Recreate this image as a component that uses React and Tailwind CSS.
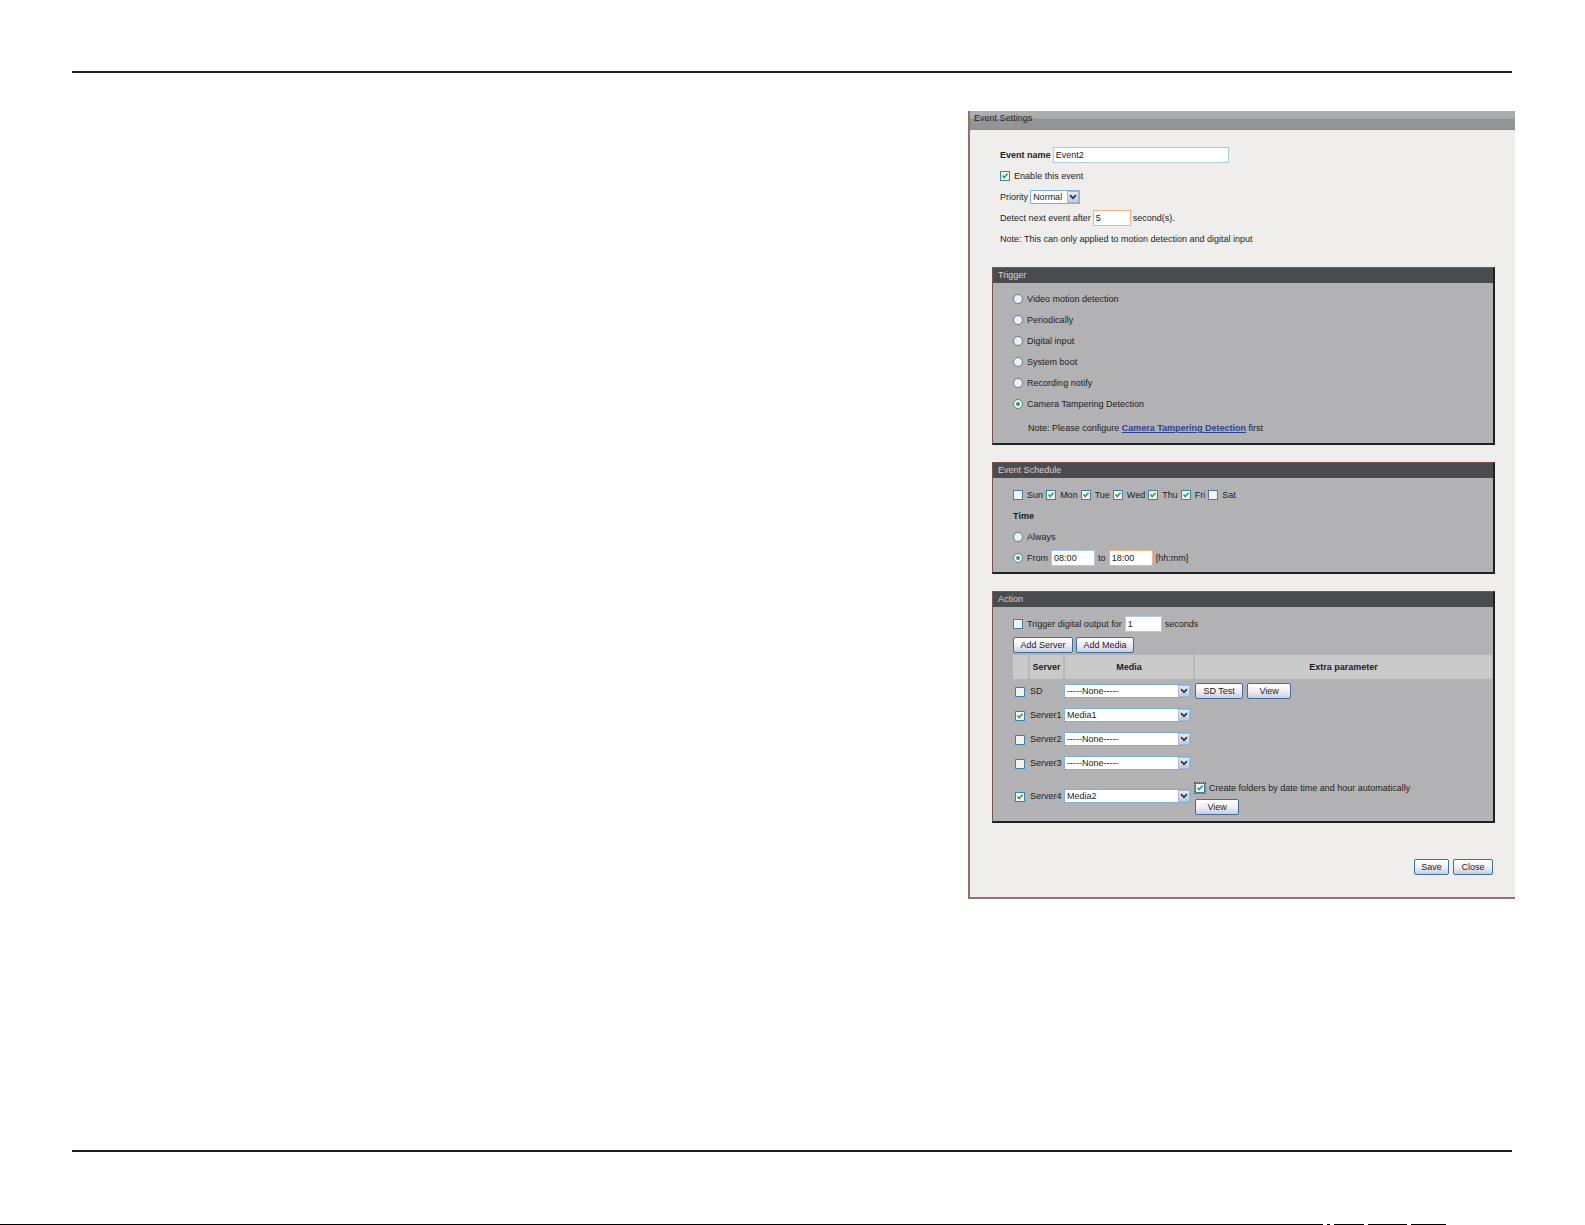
import React from 'react';

const triggers = [
    'Video motion detection',
    'Periodically',
    'Digital input',
    'System boot',
    'Recording notify',
    'Camera Tampering Detection',
];

const days = [
    { name: 'Sun', on: false },
    { name: 'Mon', on: true },
    { name: 'Tue', on: true },
    { name: 'Wed', on: true },
    { name: 'Thu', on: true },
    { name: 'Fri', on: true },
    { name: 'Sat', on: false },
];

const servers = [
    { name: 'SD', media: '-----None-----', on: false },
    { name: 'Server1', media: 'Media1', on: true },
    { name: 'Server2', media: '-----None-----', on: false },
    { name: 'Server3', media: '-----None-----', on: false },
    { name: 'Server4', media: 'Media2', on: true },
];

function Checkbox({ className = '', ...props }) {
    return (
        <span className={`relative inline-flex size-[10px] shrink-0 ${className}`}>
            <input
                type="checkbox"
                className="peer size-full appearance-none border border-[#3f7fae] bg-[#f6f2f2]"
                {...props}
            />
            <svg
                viewBox="0 0 10 10"
                className="pointer-events-none absolute inset-0 hidden size-full peer-checked:block"
            >
                <path d="M2.5 4.6 L4.2 6.6 L7.6 2.8" fill="none" stroke="#2fa24c" strokeWidth="1.6" />
            </svg>
        </span>
    );
}

function Radio(props) {
    return (
        <span className="relative inline-flex size-[10px] shrink-0">
            <input
                type="radio"
                className="peer size-full appearance-none rounded-full border border-[#4c7f9f] bg-[#f4efee]"
                {...props}
            />
            <span className="pointer-events-none absolute inset-[3px] hidden rounded-full bg-[#2fa24c] peer-checked:block" />
        </span>
    );
}

function TextBox({ className = '', active = false, ...props }) {
    return (
        <input
            type="text"
            className={`h-4 border bg-white px-[2px] ${active ? 'border-[#f5b183]' : 'border-[#a9cbe3]'} ${className}`}
            {...props}
        />
    );
}

function Select({ className = '', options, ...props }) {
    return (
        <span className={`relative inline-flex h-[14px] ${className}`}>
            <select
                className="size-full appearance-none border border-[#7fb0d6] bg-white pr-[14px] pl-[2px] leading-3"
                {...props}
            >
                {options.map((option) => (
                    <option key={option}>{option}</option>
                ))}
            </select>
            <span className="pointer-events-none absolute top-px right-px bottom-px flex w-3 items-center justify-center border border-[#a9b9d0] bg-linear-to-b from-[#e6ebf3] to-[#c3c8dc]">
                <svg viewBox="0 0 8 6" className="h-[6px] w-2">
                    <path d="M1 1.2 L4 4.2 L7 1.2" fill="none" stroke="#333a40" strokeWidth="1.8" />
                </svg>
            </span>
        </span>
    );
}

function Button({ className = '', children }) {
    return (
        <button
            type="button"
            className={`h-4 rounded-xs border border-[#3c6f9c] bg-linear-to-b from-white via-[#f1eff4] to-[#cccbdf] text-center leading-3 ${className}`}
        >
            {children}
        </button>
    );
}

function Section({ title, children }) {
    return (
        <section className="mt-[17px] border border-r-2 border-b-2 border-[#7b544b] border-r-[#1d2226] border-b-[#1d2226] bg-[#b2b2b4]">
            <h2 className="h-[15px] bg-[#4b4c50] px-[5px] leading-[15px] text-[#dccfca]">{title}</h2>
            {children}
        </section>
    );
}

function Row({ className = '', children }) {
    return <div className={`flex h-[21px] items-center ${className}`}>{children}</div>;
}

export default function App() {
    return (
        <div className="flex min-h-screen flex-col bg-white font-['Liberation_Sans',Arial,sans-serif] text-[9px] leading-3 text-[#1c1c1e]">
            <hr className="mt-[71px] mr-[73px] ml-[72px] border-t-2 border-[#231f20]" />

            <main className="mt-[38px] mr-[70px] ml-[72px] flex justify-end">
                <form className="w-[37.9%] min-w-[480px] border-b-2 border-l-2 border-[#94716a] bg-[#efeeec]">
                    <h1 className="h-[19px] border-b border-[#84898c] bg-linear-to-b from-[#acadaf] from-40% to-[#929497] to-45% px-1 leading-[15px]">
                        Event Settings
                    </h1>

                    <div className="pt-[14px] pr-5 pb-[22px] pl-[22px]">
                        <div className="pb-px pl-2">
                            <Row className="gap-[2px]">
                                <label htmlFor="name" className="font-bold">Event name</label>
                                <TextBox id="name" defaultValue="Event2" className="w-44" />
                            </Row>
                            <Row>
                                <label className="flex items-center gap-1">
                                    <Checkbox defaultChecked />
                                    Enable this event
                                </label>
                            </Row>
                            <Row className="gap-[2px]">
                                <label htmlFor="priority">Priority</label>
                                <Select id="priority" options={['Normal', 'High', 'Low']} className="w-[50px]" />
                            </Row>
                            <Row className="gap-[2px]">
                                <label htmlFor="delay">Detect next event after</label>
                                <TextBox id="delay" defaultValue="5" active className="w-[38px]" />
                                second(s).
                            </Row>
                            <Row>Note: This can only applied to motion detection and digital input</Row>
                        </div>

                        <Section title="Trigger">
                            <div className="px-5 pt-[5px] pb-[9px]">
                                {triggers.map((name, i) => (
                                    <Row key={name}>
                                        <label className="flex items-center gap-1">
                                            <Radio name="trigger" defaultChecked={i === triggers.length - 1} />
                                            {name}
                                        </label>
                                    </Row>
                                ))}
                                <p className="mt-2 pl-[15px]">
                                    Note: Please configure{' '}
                                    <a href="#tampering" className="font-bold text-[#2c3f94] underline">
                                        Camera Tampering Detection
                                    </a>{' '}
                                    first
                                </p>
                            </div>
                        </Section>

                        <Section title="Event Schedule">
                            <div className="px-5 pt-[6px] pb-1">
                                <Row>
                                    {days.map((day) => (
                                        <label key={day.name} className="flex items-center gap-1 pr-[3px]">
                                            <Checkbox defaultChecked={day.on} />
                                            {day.name}
                                        </label>
                                    ))}
                                </Row>
                                <Row className="font-bold">Time</Row>
                                <Row>
                                    <label className="flex items-center gap-1">
                                        <Radio name="time" />
                                        Always
                                    </label>
                                </Row>
                                <Row className="gap-[3px]">
                                    <label className="flex items-center gap-1">
                                        <Radio name="time" defaultChecked />
                                        From
                                    </label>
                                    <TextBox aria-label="Start time" defaultValue="08:00" className="w-11" />
                                    to
                                    <TextBox aria-label="End time" defaultValue="18:00" active className="w-11" />
                                    [hh:mm]
                                </Row>
                            </div>
                        </Section>

                        <Section title="Action">
                            <div className="pt-[6px] pr-px pb-1 pl-5">
                                <Row className="gap-[3px]">
                                    <label className="flex items-center gap-1">
                                        <Checkbox />
                                        Trigger digital output for
                                    </label>
                                    <TextBox aria-label="Output seconds" defaultValue="1" className="w-[37px]" />
                                    seconds
                                </Row>
                                <Row className="gap-[3px]">
                                    <Button className="w-[60px]">Add Server</Button>
                                    <Button className="w-[58px]">Add Media</Button>
                                </Row>
                                <table className="w-full table-fixed border-collapse">
                                    <thead>
                                        <tr className="h-6 bg-[#cacaca]">
                                            <th className="w-4 border-r-2 border-[#b9b9ba]" aria-label="Enabled" />
                                            <th className="w-[35px] border-r-2 border-[#b9b9ba]">Server</th>
                                            <th className="w-[130px] border-r-2 border-[#b9b9ba]">Media</th>
                                            <th>Extra parameter</th>
                                        </tr>
                                    </thead>
                                    <tbody>
                                        {servers.map((server) => (
                                            <tr key={server.name} className="h-6 last:h-[42px]">
                                                <td className="pl-[2px]">
                                                    <Checkbox
                                                        id={server.name}
                                                        defaultChecked={server.on}
                                                        className="align-middle"
                                                    />
                                                </td>
                                                <td className="pl-px">
                                                    <label htmlFor={server.name}>{server.name}</label>
                                                </td>
                                                <td>
                                                    <Select
                                                        aria-label={`${server.name} media`}
                                                        options={['-----None-----', 'Media1', 'Media2']}
                                                        defaultValue={server.media}
                                                        className="w-[127px] align-middle"
                                                    />
                                                </td>
                                                <td className="pl-px">
                                                    {server.name === 'SD' && (
                                                        <div className="flex gap-1">
                                                            <Button className="w-12">SD Test</Button>
                                                            <Button className="w-11">View</Button>
                                                        </div>
                                                    )}
                                                    {server.name === 'Server4' && (
                                                        <div className="flex flex-col items-start gap-[5px] pt-1">
                                                            <label className="flex items-center gap-1">
                                                                <Checkbox
                                                                    defaultChecked
                                                                    className="outline outline-dotted outline-[#4b4c50]"
                                                                />
                                                                Create folders by date time and hour automatically
                                                            </label>
                                                            <Button className="w-11">View</Button>
                                                        </div>
                                                    )}
                                                </td>
                                            </tr>
                                        ))}
                                    </tbody>
                                </table>
                            </div>
                        </Section>

                        <div className="mt-9 flex justify-end gap-1 pr-[2px]">
                            <Button className="w-[35px]">Save</Button>
                            <Button className="w-10">Close</Button>
                        </div>
                    </div>
                </form>
            </main>

            <hr className="mt-auto mr-[73px] ml-[72px] border-t-2 border-[#231f20]" />
            <div className="mt-[72px] flex h-px gap-1">
                <div className="w-[83.5%] shrink-0 bg-black" />
                <div className="w-[3px] bg-black" />
                <div className="w-[30px] bg-black" />
                <div className="w-[39px] bg-black" />
                <div className="w-[35px] bg-black" />
            </div>
        </div>
    );
}
